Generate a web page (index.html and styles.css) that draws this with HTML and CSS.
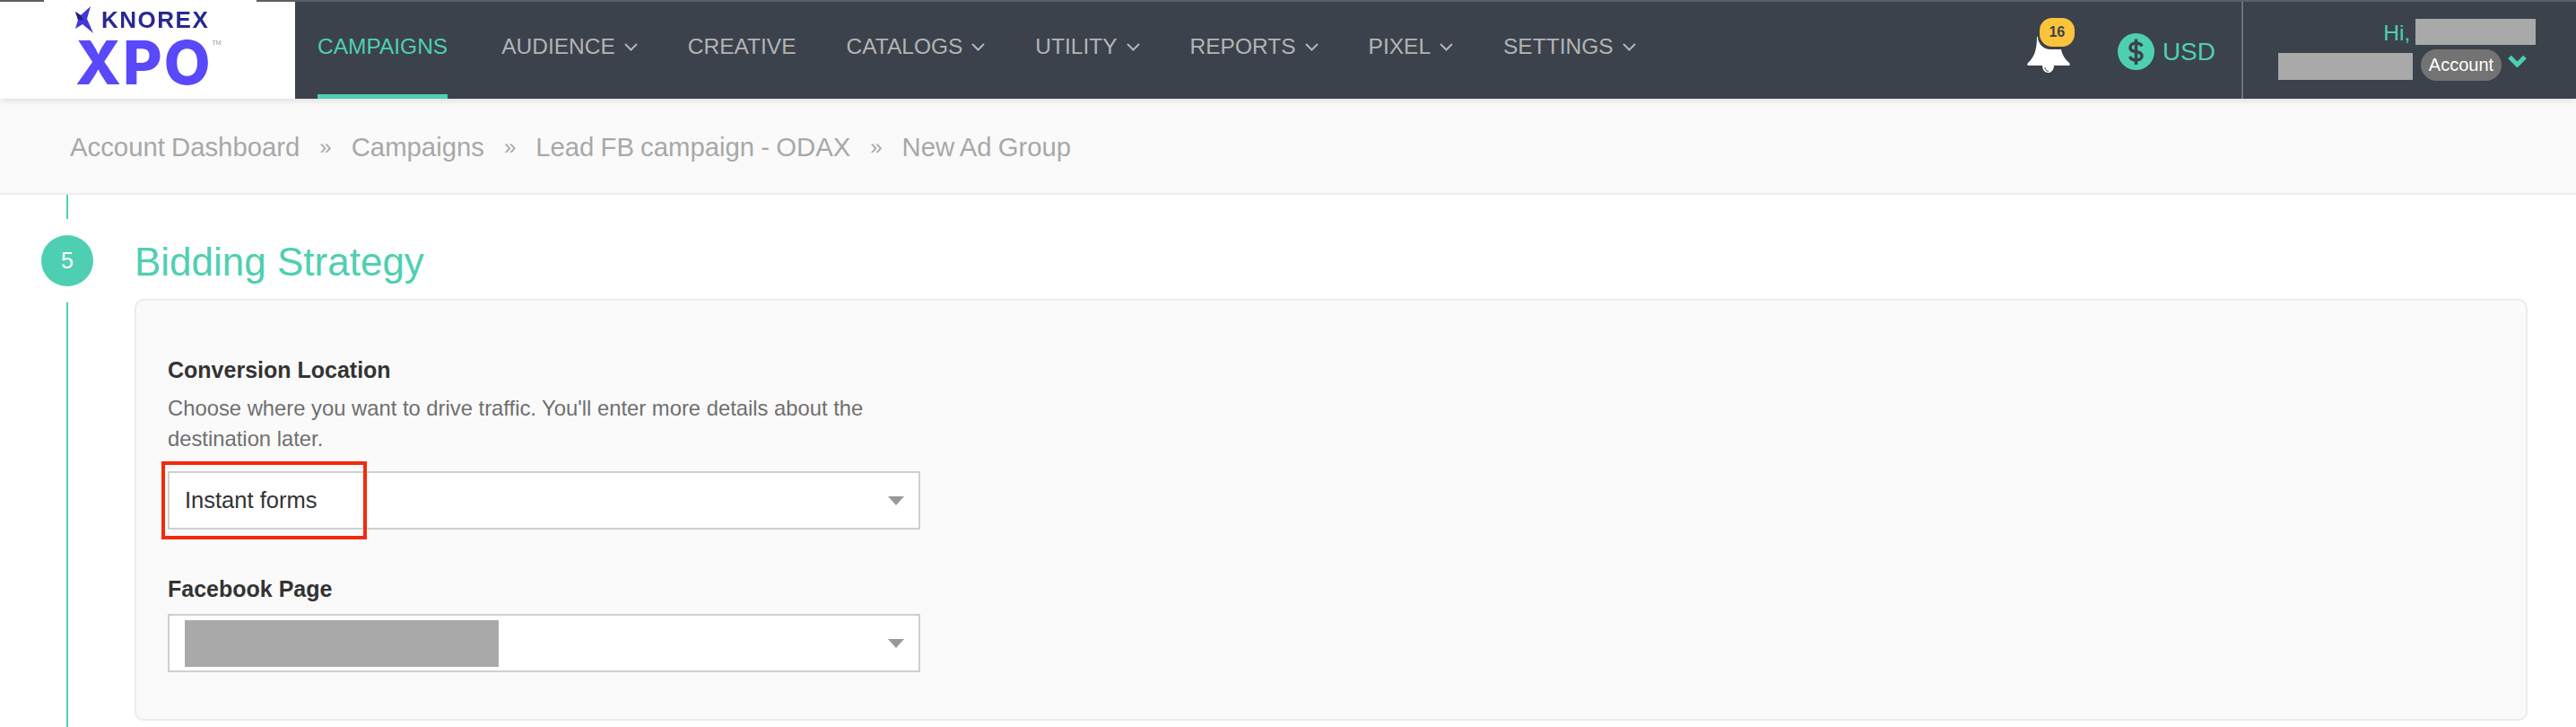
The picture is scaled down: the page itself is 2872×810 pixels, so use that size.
FILE: index.html
```html
<!DOCTYPE html>
<html lang="en">
<head>
    <meta charset="UTF-8">
    <title>New Ad Group</title>
    <link rel="stylesheet" href="styles.css">
</head>
<body>
    <header class="header">
        <div class="top-strip"><div class="top-strip-gap"></div></div>
        <div class="header-row">
            <a class="logo">
                <div class="logo-top">
                    <svg class="logo-mark" width="21" height="31" viewBox="0 0 21 31">
                        <polygon points="0,6 6,10 17,0 13,14 20,30 8,20 0,25 3,15" fill="#4436d8"/>
                        <polygon points="0,6 6,10 9,16 3,15" fill="#241f8a"/>
                    </svg>
                    <span class="logo-knorex">KNOREX</span>
                </div>
                <div class="logo-bottom"><span class="logo-xpo">XPO</span><span class="logo-tm">TM</span></div>
            </a>
            <nav class="nav">
                <a class="nav-item active">CAMPAIGNS</a>
                <a class="nav-item">AUDIENCE <svg class="caret" width="15" height="9" viewBox="0 0 15 9"><path d="M1 1l6.5 6.5L14 1"/></svg></a>
                <a class="nav-item">CREATIVE</a>
                <a class="nav-item">CATALOGS <svg class="caret" width="15" height="9" viewBox="0 0 15 9"><path d="M1 1l6.5 6.5L14 1"/></svg></a>
                <a class="nav-item">UTILITY <svg class="caret" width="15" height="9" viewBox="0 0 15 9"><path d="M1 1l6.5 6.5L14 1"/></svg></a>
                <a class="nav-item">REPORTS <svg class="caret" width="15" height="9" viewBox="0 0 15 9"><path d="M1 1l6.5 6.5L14 1"/></svg></a>
                <a class="nav-item">PIXEL <svg class="caret" width="15" height="9" viewBox="0 0 15 9"><path d="M1 1l6.5 6.5L14 1"/></svg></a>
                <a class="nav-item">SETTINGS <svg class="caret" width="15" height="9" viewBox="0 0 15 9"><path d="M1 1l6.5 6.5L14 1"/></svg></a>
            </nav>
            <div class="bell">
                <svg width="48" height="40" viewBox="0 0 48 40">
                    <path d="M11 0C11 16 7 24 1 29Q-1 32 2 32H46Q49 32 47 29C41 24 38 18 37 8Z" fill="#fff"/>
                    <path d="M17 32H30C30 37 27 40 23.500 40S17 37 17 32Z" fill="#fff"/>
                    <path d="M20 34C20 36 21 38 24 38.500" fill="none" stroke="#3b424c" stroke-width="1"/>
                </svg>
                <span class="bell-badge">16</span>
            </div>
            <div class="currency">
                <svg width="41" height="41" viewBox="0 0 41 41">
                    <circle cx="20.500" cy="20.500" r="20.500" fill="#4fcfb2"/>
                    <path d="M27 14.500C26 12 24 11 20.500 11C16.500 11 14 13 14 16C14 23 27 18 27 25.500C27 28.500 24 30 20.500 30C17 30 14.500 28.500 13.500 26" fill="none" stroke="#3b424c" stroke-width="3.500"/>
                    <path d="M20.500 6.500V35" stroke="#3b424c" stroke-width="3.500"/>
                </svg>
                <span>USD</span>
            </div>
            <div class="account">
                <div class="account-hi">Hi, A<span class="redact redact-name"></span></div>
                <div class="account-row">
                    <span class="redact redact-org"></span>
                    <span class="account-pill">Account</span>
                    <svg class="account-caret" width="21" height="14" viewBox="0 0 21 14"><path d="M2 2.500l8.500 8.500L19 2.500"/></svg>
                </div>
            </div>
        </div>
    </header>

    <div class="breadcrumb">
        <a>Account Dashboard</a><span class="crumb-sep">»</span>
        <a>Campaigns</a><span class="crumb-sep">»</span>
        <a>Lead FB campaign - ODAX</a><span class="crumb-sep">»</span>
        <a>New Ad Group</a>
    </div>

    <main class="step">
        <div class="step-rail">
            <div class="rail-line rail-line-top"></div>
            <div class="step-num">5</div>
            <div class="rail-line"></div>
        </div>
        <div class="step-body">
            <h2 class="step-title">Bidding Strategy</h2>
            <section class="card">
                <div class="field field-location">
                    <label class="field-label">Conversion Location</label>
                    <p class="field-help">Choose where you want to drive traffic. You'll enter more details about the destination later.</p>
                    <div class="select">
                        <span>Instant forms</span>
                        <i class="select-arrow"></i>
                        <div class="highlight"></div>
                    </div>
                </div>
                <div class="field">
                    <label class="field-label">Facebook Page</label>
                    <div class="select">
                        <span class="redact redact-page"></span>
                        <i class="select-arrow"></i>
                    </div>
                </div>
            </section>
        </div>
    </main>
</body>
</html>
```

FILE: styles.css
```css
* {
    box-sizing: border-box;
}
html, body {
    height: 100%;
}
body {
    display: flex;
    flex-direction: column;
    margin: 0;
    overflow: hidden;
    background: #fff;
    font-family: "Liberation Sans", Arial, sans-serif;
}

/* top bar */
.header {
    position: relative;
    z-index: 2;
    background: #3b424c;
    box-shadow: 0 2px 8px rgba(0, 0, 0, 0.12);
}
.top-strip {
    height: 2px;
    background: #5c6066;
}
.top-strip-gap {
    width: 237px;
    height: 2px;
    margin-left: 49px;
    background: #fff;
}
.header-row {
    display: flex;
    height: 108px;
}
.logo {
    width: 329px;
    padding: 4px 0 0 84px;
    background: #fff;
    filter: blur(0.6px);
}
.logo-top {
    display: flex;
    align-items: center;
    gap: 8px;
    height: 32px;
}
.logo-knorex {
    color: #2a2890;
    font-size: 26px;
    font-weight: 700;
    letter-spacing: 1.5px;
}
.logo-bottom {
    display: flex;
    align-items: flex-start;
    margin-top: 3px;
}
.logo-xpo {
    color: #5a48fb;
    font-family: Inter, "Liberation Sans", sans-serif;
    font-size: 67px;
    font-weight: 800;
    letter-spacing: 2px;
    line-height: 58px;
}
.logo-tm {
    color: #999;
    font-size: 7px;
    line-height: 14px;
}
.nav {
    display: flex;
    gap: 56px;
    padding-left: 25px;
}
.nav-item {
    display: flex;
    align-items: center;
    gap: 10px;
    height: 108px;
    padding-bottom: 8px;
    color: #b4b4b4;
    font-size: 24.500px;
    white-space: nowrap;
}
.nav-item.active {
    margin-right: 4px;
    color: #4fcfb2;
    border-bottom: 5px solid #4fcfb2;
    padding-bottom: 3px;
}
.caret {
    fill: none;
    stroke: #b4b4b4;
    stroke-width: 2;
}
.bell {
    position: relative;
    width: 48px;
    height: 40px;
    margin: 39px 0 0 auto;
}
.bell svg {
    display: block;
}
.bell-badge {
    position: absolute;
    top: -21px;
    left: 14px;
    width: 39px;
    height: 32px;
    border-radius: 14px;
    background: #fdc33b;
    box-shadow: -2px 3px 0 #3b424c;
    color: #3b424c;
    font-size: 16px;
    font-weight: 700;
    line-height: 32px;
    text-align: center;
}
.currency {
    display: flex;
    align-items: center;
    gap: 9px;
    margin: 3px 29px 0 53px;
    color: #4fcfb2;
    font-size: 28px;
}
.account {
    display: flex;
    flex-direction: column;
    align-items: flex-end;
    width: 373px;
    padding: 19px 45px 0 0;
    border-left: 2px solid #6d7279;
}
.account-hi {
    display: flex;
    height: 29px;
    color: #4fcfb2;
    font-size: 24.500px;
    line-height: 32px;
}
.redact {
    display: block;
    background: #a9a9a9;
}
.redact-name {
    width: 134px;
    height: 29px;
    margin-left: -16px;
}
.account-row {
    display: flex;
    align-items: center;
    height: 35px;
    margin: 5px 0 0;
    padding-right: 10px;
}
.redact-org {
    width: 150px;
    height: 30px;
    margin-top: 3px;
}
.account-pill {
    width: 90px;
    height: 35px;
    margin-left: 9px;
    border-radius: 18px;
    background: #737373;
    color: #fff;
    font-size: 20px;
    line-height: 35px;
    text-align: center;
}
.account-caret {
    margin: -9px 0 0 7px;
    fill: none;
    stroke: #4fcfb2;
    stroke-width: 5;
}

/* breadcrumb */
.breadcrumb {
    display: flex;
    align-items: center;
    flex: none;
    height: 107px;
    padding: 2px 0 0 78px;
    background: #fafafa;
    border-bottom: 2px solid #ececec;
    color: #a8a8a8;
    font-size: 29.300px;
    word-spacing: -1px;
}
.crumb-sep {
    margin: 0 22px;
    font-size: 24px;
}

/* step */
.step {
    display: flex;
    flex: 1;
    min-height: 0;
    padding: 0 54px 0 46px;
}
.step-rail {
    display: flex;
    flex-direction: column;
    align-items: center;
    width: 58px;
    gap: 18px;
}
.rail-line {
    flex: 1;
    width: 2px;
    background: #4fcfb2;
}
.rail-line-top {
    flex: none;
    height: 27px;
}
.step-num {
    flex: none;
    width: 58px;
    height: 57px;
    border-radius: 50%;
    background: #4fcfb2;
    color: #fff;
    font-size: 25px;
    line-height: 57px;
    text-align: center;
}
.step-body {
    flex: 1;
    margin-left: 46px;
}
.step-title {
    height: 116px;
    margin: 0;
    padding-top: 50px;
    color: #4fcfb2;
    font-size: 44px;
    font-weight: 400;
    line-height: 50px;
}
.card {
    height: 470px;
    padding: 61px 0 0 35px;
    background: #fafafa;
    border: 2px solid #ececec;
    border-radius: 10px;
}
.field {
    width: 839px;
}
.field-location {
    margin-bottom: 50px;
}
.field-label {
    display: block;
    color: #333;
    font-size: 25px;
    font-weight: 700;
    line-height: 32px;
}
.field-help {
    margin: 10px 0 19px;
    color: #6f6f6f;
    font-size: 23.800px;
    line-height: 34px;
}
.select {
    position: relative;
    display: flex;
    align-items: center;
    height: 65px;
    margin-top: 12px;
    padding-left: 17px;
    background: #fff;
    border: 2px solid #cfcfcf;
    color: #333;
    font-size: 25.500px;
}
.field-location .select {
    margin-top: 0;
}
.select-arrow {
    position: absolute;
    top: 50%;
    right: 16px;
    margin-top: -5px;
    border-style: solid;
    border-width: 10px 9.500px 0;
    border-color: #999 transparent transparent;
}
.highlight {
    position: absolute;
    top: -13px;
    left: -9px;
    width: 229px;
    height: 87px;
    border: 4px solid #f32a0c;
}
.redact-page {
    width: 350px;
    height: 52px;
}
```
